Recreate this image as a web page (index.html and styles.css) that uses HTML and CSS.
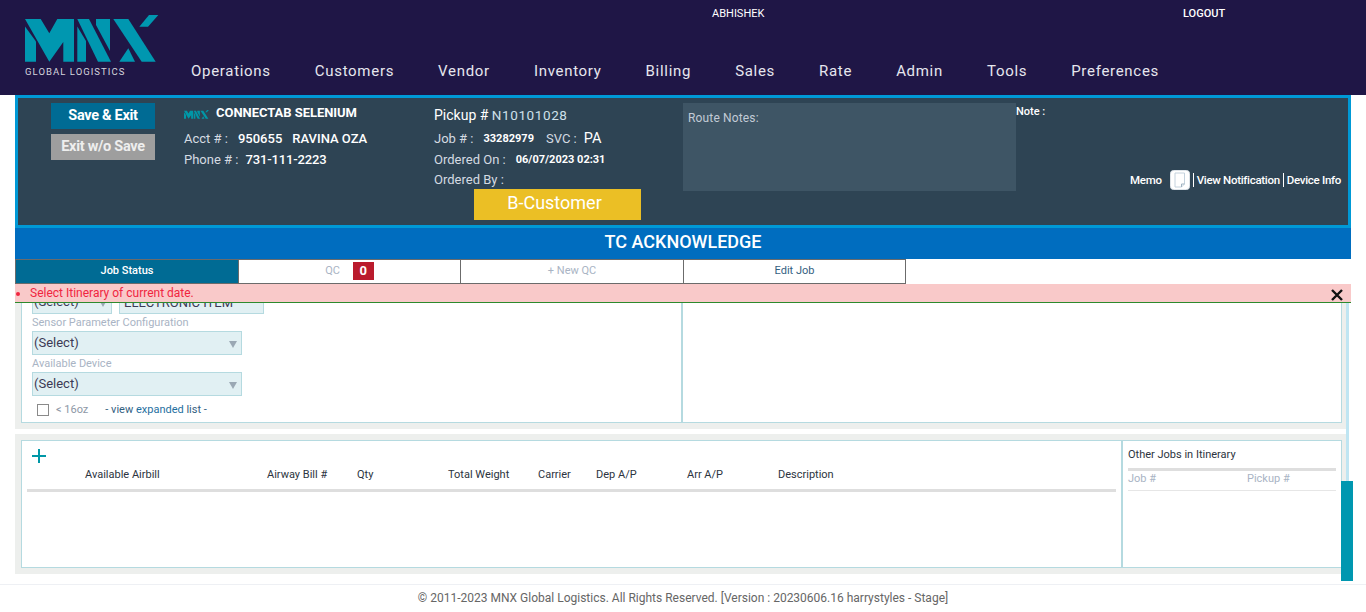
FILE: index.html
```html
<!DOCTYPE html>
<html lang="en">
<head>
<meta charset="utf-8">
<title>TC Acknowledge</title>
<link rel="stylesheet" href="styles.css">
</head>
<body>
<svg class="defs" width="0" height="0" aria-hidden="true">
  <symbol id="mnx" viewBox="0 0 134 47">
    <polygon points="0,11.5 11,26.5 11,46.7 0,46.7"/>
    <polygon points="0,4 15.7,4 24.3,18.3 32.3,4 49,4 49,46.7 38.3,46.7 38.3,27 24.3,46.7"/>
    <polygon points="52.3,11.5 61,26 61,46.7 52.3,46.7"/>
    <polygon points="52.3,4 64,4 86,46.7 73,46.7"/>
    <polygon points="71,4 85,4 85,36 71,10"/>
    <polygon points="88.3,4 103.3,4 130.7,46.7 116.7,46.7"/>
    <polygon points="94.3,46.7 103.3,33.3 110,46.7"/>
    <polygon points="124,0 133.3,0 123,11.7 114.3,11.7"/>
  </symbol>
</svg>
<header class="topbar">
  <div class="brand">
    <svg class="brand-mark"><use href="#mnx"/></svg>
    <div class="brand-sub">GLOBAL LOGISTICS</div>
  </div>
  <div class="topbar-main">
    <div class="userline">
      <span class="user">ABHISHEK</span>
      <a class="logout">LOGOUT</a>
    </div>
    <nav class="nav">
      <a>Operations</a><a>Customers</a><a>Vendor</a><a>Inventory</a><a>Billing</a><a>Sales</a><a>Rate</a><a>Admin</a><a>Tools</a><a>Preferences</a>
    </nav>
  </div>
</header>
<main class="page">
  <section class="job-panel">
    <div class="actions">
      <button class="btn btn-save">Save &amp; Exit</button>
      <button class="btn btn-exit">Exit w/o Save</button>
    </div>
    <div class="customer">
      <div class="cust-name"><svg class="mini-mark"><use href="#mnx"/></svg><b>CONNECTAB SELENIUM</b></div>
      <div class="info-row"><span class="lbl">Acct # :</span><span class="val wide">950655</span><span class="val wide">RAVINA OZA</span></div>
      <div class="info-row"><span class="lbl">Phone # :</span><span class="val tight">731-111-2223</span></div>
    </div>
    <div class="pickup">
      <div class="pickup-title">Pickup # <span class="tech">N10101028</span></div>
      <div class="info-row"><span class="lbl">Job # :</span><b class="small-val">33282979</b><span class="lbl svc">SVC :</span><span class="svc-val">PA</span></div>
      <div class="info-row"><span class="lbl">Ordered On :</span><b class="small-val">06/07/2023 02:31</b></div>
      <div class="info-row"><span class="lbl">Ordered By :</span></div>
      <div class="badge">B-Customer</div>
    </div>
    <div class="route-notes">Route Notes:</div>
    <div class="notes">
      <div class="note-label">Note :</div>
      <div class="links">
        <span class="memo">Memo</span>
        <span class="memo-icon"><svg width="20" height="20" viewBox="0 0 20 20"><rect x="0.5" y="0.5" width="19" height="19" rx="3" fill="#fff" stroke="#dfe5ea"/><path d="M5 3h9.5v11l-3 3H5z" fill="#fff" stroke="#c4d2dd"/><path d="M11.5 17v-3h3" fill="none" stroke="#9fb2c0"/></svg></span>
        <a class="link sep">View Notification</a>
        <a class="link sep">Device Info</a>
      </div>
    </div>
  </section>
  <h1 class="title">TC ACKNOWLEDGE</h1>
  <div class="tabs">
    <a class="tab tab-active">Job Status</a>
    <a class="tab tab-muted">QC <span class="count">0</span></a>
    <a class="tab tab-muted">+ New QC</a>
    <a class="tab tab-edit">Edit Job</a>
  </div>
  <div class="alert-wrap">
    <div class="alert">
      <ul><li>Select Itinerary of current date.</li></ul>
      <svg class="alert-close" width="12" height="12" viewBox="0 0 12 12"><path d="M1 1l10 10M11 1L1 11" stroke="#111" stroke-width="2.4"/></svg>
    </div>
    <section class="block block-top">
      <div class="card card-form">
        <div class="form-col">
          <div class="row-first">
            <div class="select select-short">(Select)<i class="caret"></i></div>
            <div class="select select-text">ELECTRONIC ITEM</div>
          </div>
          <div class="field-label">Sensor Parameter Configuration</div>
          <div class="select">(Select)<i class="caret"></i></div>
          <div class="field-label">Available Device</div>
          <div class="select">(Select)<i class="caret"></i></div>
          <div class="check-row"><i class="check"></i><span>&lt; 16oz</span><span class="expand">- view <a>expanded</a> list -</span></div>
        </div>
        <div class="form-col-right"></div>
      </div>
    </section>
    <section class="block block-bottom">
      <div class="card card-air">
        <div class="air-col">
          <svg class="plus" width="14" height="14" viewBox="0 0 14 14"><path d="M7 0v14M0 7h14" stroke="#0097a7" stroke-width="2"/></svg>
          <div class="air-head">
            <span class="c1">Available Airbill</span><span class="c2">Airway Bill #</span><span class="c3">Qty</span><span class="c4">Total Weight</span><span class="c5">Carrier</span><span class="c6">Dep A/P</span><span class="c7">Arr A/P</span><span class="c8">Description</span>
          </div>
        </div>
        <div class="other-col">
          <div class="other-title">Other Jobs in Itinerary</div>
          <div class="other-head"><span>Job #</span><span>Pickup #</span></div>
        </div>
      </div>
    </section>
  </div>
  <div class="track"><div class="thumb"></div></div>
</main>
<footer class="footer">© 2011-2023 MNX Global Logistics. All Rights Reserved. [Version : 20230606.16 harrystyles - Stage]</footer>
</body>
</html>
```
FILE: styles.css
```css
* { box-sizing: border-box; }
html, body { margin: 0; padding: 0; }
body { width: 1366px; height: 612px; overflow: hidden; background: #fff; font-family: Roboto, "Liberation Sans", sans-serif; color: #333; }
.defs { position: absolute; }
a { text-decoration: none; }

.topbar { height: 95px; background: #1f1646; display: flex; color: #fff; }
.brand { width: 191px; padding: 15px 0 0 25px; }
.brand-mark { display: block; width: 134px; height: 47px; fill: #0097b0; }
.brand-sub { margin-top: 4px; font-size: 9.5px; letter-spacing: 1.05px; color: #d5d5dd; white-space: nowrap; }
.topbar-main { flex: 1; display: flex; flex-direction: column; }
.userline { height: 61px; padding-top: 7px; font-size: 11px; display: flex; }
.user { margin-left: 521px; width: 471px; }
.logout { font-weight: 500; }
.nav { display: flex; gap: 44px; font-size: 15px; letter-spacing: 0.7px; color: #e6e6ee; }
.nav a { white-space: nowrap; line-height: 20px; }

.page { position: relative; padding: 0 15px; height: 489px; }
.job-panel { height: 133px; background: #2e4454; border: 3px solid #0099d6; display: flex; color: #fff; position: relative; }
.actions { width: 166px; padding: 5px 0 0 33px; display: flex; flex-direction: column; gap: 5px; }
.btn { width: 104px; height: 26px; border: 0; color: #fff; font: 700 14.5px/24px Roboto, sans-serif; letter-spacing: -0.3px; padding: 0; }
.btn-save { background: #006b94; }
.btn-exit { background: #9e9e9e; color: #eee; }
.customer { width: 250px; padding-top: 6px; }
.cust-name { display: flex; align-items: center; height: 17px; margin-bottom: 7.3px; }
.cust-name b { font-size: 13px; letter-spacing: -0.04px; }
.mini-mark { width: 25px; height: 11px; margin: 3px 7px 0 0; fill: #0097a7; }
.info-row { display: flex; height: 20.5px; align-items: center; font-size: 13px; white-space: nowrap; }
.lbl { color: #d5dbe2; }
.val { font-weight: 500; }
.val.wide { margin-left: 10px; }
.val.tight { margin-left: 7px; letter-spacing: -0.15px; }
.pickup { width: 249px; padding-top: 7px; }
.pickup-title { font-size: 14px; height: 20px; margin-bottom: 3.3px; line-height: 20px; }
.tech { color: #cfe0ea; letter-spacing: 0.6px; font-size: 13.5px; }
.small-val { font-size: 11px; margin-left: 10px; font-weight: 700; }
.svc { margin-left: 12px; }
.svc-val { font-size: 14.5px; margin-left: 7px; }
.badge { width: 167px; height: 31px; margin: -0.8px 0 0 40px; padding-right: 6px; background: #ebbf25; color: #fff; font-size: 18px; line-height: 28px; text-align: center; }
.route-notes { width: 333px; height: 88px; margin-top: 5px; background: #3e5565; color: #c2cbd6; font-size: 12px; padding: 8px 5px; letter-spacing: 0.15px; }
.notes { flex: 1; display: flex; flex-direction: column; justify-content: space-between; }
.note-label { font-size: 11px; font-weight: 500; padding-top: 7px; }
.links { display: flex; align-items: center; justify-content: flex-end; font-size: 11.5px; font-weight: 500; padding: 0 7px 35px 0; letter-spacing: -0.3px; white-space: nowrap; }
.memo { margin-right: 8px; }
.memo-icon { display: flex; width: 20px; height: 20px; }
.sep { border-left: 1px solid #fff; height: 14px; line-height: 14px; padding-left: 3px; margin-left: 3px; }

.title { height: 31px; margin: 0; background: #006dbf; color: #fff; text-align: center; font-size: 18px; font-weight: 500; line-height: 27px; }
.tabs { display: flex; height: 25px; }
.tab { height: 25px; border: 1px solid #6b6b6b; border-left-width: 0; font-size: 11px; text-align: center; line-height: 21px; background: #fff; }
.tab-active { width: 224px; background: #006b94; color: #fff; font-weight: 500; border-left-width: 1px; }
.tab-muted { width: 222px; color: #a9b4c4; display: block; }
.tab-muted + .tab-muted { width: 223px; }
.tab-edit { width: 222px; color: #33607f; }
.count { display: inline-block; width: 21px; height: 18px; margin: 2px 0 0 10px; background: #ba1b2d; color: #fff; font-weight: 700; font-size: 13px; line-height: 18px; vertical-align: top; }

.alert-wrap { position: relative; }
.alert { position: absolute; left: 0; top: 0; width: 1336px; height: 19px; background: #f9c9c9; border-bottom: 1px solid #2d8a2d; color: #f0253f; font-size: 12px; line-height: 18px; z-index: 2; }
.alert ul { margin: 0; padding: 0 0 0 15px; }
.alert-close { position: absolute; right: 8px; top: 5px; }

.block { width: 1331px; background: #edefed; padding: 0 4px 6px 6px; }
.block-top { height: 145px; }
.block-bottom { height: 140px; margin-top: 5px; padding-top: 6px; }
.card { background: #fff; border: 1px solid #b5dae0; display: flex; }
.card-form { height: 139px; border-top: 0; }
.form-col { width: 661px; padding: 6px 0 0 10px; border-right: 2px solid #b5dae0; }
.form-col-right { flex: 1; }
.row-first { display: flex; gap: 7px; }
.select { position: relative; width: 210px; height: 24px; background: #e1f0f3; border: 1px solid #b5dae0; color: #3c3a55; font-size: 13px; line-height: 21px; padding-left: 1px; }
.select-short { width: 80px; }
.select-text { width: 145px; padding-left: 4px; line-height: 23px; }
.caret { position: absolute; right: 4px; top: 9px; width: 0; height: 0; border: 4px solid transparent; border-top: 7px solid #9aa8b4; border-bottom: 0; }
.field-label { font-size: 11px; color: #a9b4c4; height: 17px; line-height: 18px; }
.check-row { display: flex; align-items: center; height: 26px; padding: 1px 0 0 5px; font-size: 11px; color: #8e98a6; }
.check { width: 12px; height: 12px; border: 1px solid #8a8a8a; background: #fff; margin-right: 7px; }
.expand { margin-left: 17px; color: #33607f; }
.expand a { color: #1f6f9f; }

.card-air { height: 128px; }
.air-col { flex: 0 0 1101px; padding: 8px 0 0 5px; border-right: 2px solid #b5dae0; }
.plus { display: block; margin-left: 5px; }
.air-head { position: relative; height: 26px; margin-top: 3px; border-bottom: 3px solid #dedede; width: 1089px; font-size: 11px; color: #2c3440; }
.air-head span { position: absolute; top: 2px; white-space: nowrap; }
.c1 { left: 58px; } .c2 { left: 240px; } .c3 { left: 330px; } .c4 { left: 421px; } .c5 { left: 511px; } .c6 { left: 569px; } .c7 { left: 660px; } .c8 { left: 751px; }
.other-col { flex: 1; min-width: 0; padding: 7px 5px 0 5px; }
.other-title { font-size: 11px; color: #2c3440; height: 20px; line-height: 13px; }
.other-head { display: flex; border-top: 3px solid #dedede; border-bottom: 1px solid #e6e6e6; height: 23px; font-size: 11px; color: #a9b4c4; line-height: 13px; padding-top: 1px; }
.other-head span { flex: 0 0 119px; }

.track { position: absolute; left: 1346px; top: 208px; width: 3px; height: 278px; background: #bfe5f2; }
.thumb { position: absolute; left: -5px; top: 178px; width: 12px; height: 100px; background: #0097b0; }
.footer { height: 28px; border-top: 1px solid #eef0f4; text-align: center; font-size: 12px; line-height: 26px; color: #666; }
```
